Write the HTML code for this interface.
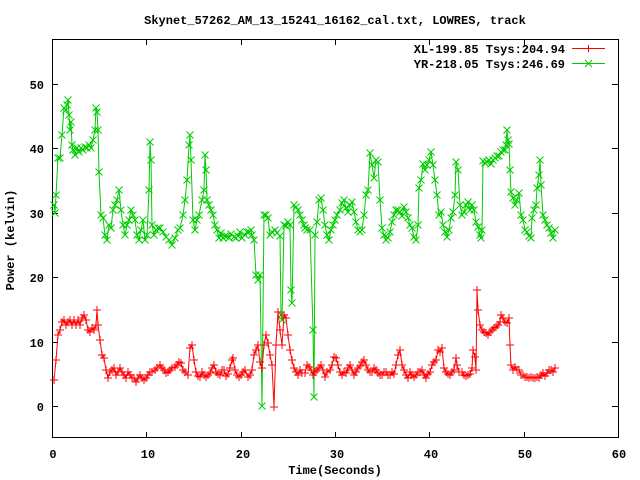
<!DOCTYPE html>
<html><head><style>
html,body{margin:0;padding:0;background:#fff;}
svg{display:block;}
text{font-family:"Liberation Mono",monospace;font-weight:bold;font-size:12px;fill:#000;}
</style></head><body>
<svg width="640" height="480" viewBox="0 0 640 480">
<defs>
<marker id="mp" markerUnits="userSpaceOnUse" markerWidth="10" markerHeight="10" refX="5" refY="5" overflow="visible"><path d="M1 5H9M5 1V9" stroke="#f00" stroke-width="1" fill="none"/></marker>
<marker id="mx" markerUnits="userSpaceOnUse" markerWidth="10" markerHeight="10" refX="5" refY="5" overflow="visible"><path d="M1.5 1.5L8.5 8.5M8.5 1.5L1.5 8.5" stroke="#0c0" stroke-width="1" fill="none"/></marker>
</defs>
<text x="335" y="24" text-anchor="middle">Skynet_57262_AM_13_15241_16162_cal.txt, LOWRES, track</text>
<g stroke="#000" stroke-width="1" fill="none" shape-rendering="crispEdges">
<rect x="52.5" y="39.5" width="566" height="398"/>
<path d="M52 84.5h6M52 148.5h6M52 213.5h6M52 277.5h6M52 342.5h6M52 406.5h6M618 84.5h-6M618 148.5h-6M618 213.5h-6M618 277.5h-6M618 342.5h-6M618 406.5h-6"/>
<path d="M146.5 438v-6M241.5 438v-6M335.5 438v-6M429.5 438v-6M524.5 438v-6M146.5 39v6M241.5 39v6M335.5 39v6M429.5 39v6M524.5 39v6"/>
</g>
<g text-anchor="end">
<text x="44" y="89">50</text><text x="44" y="153">40</text><text x="44" y="218">30</text><text x="44" y="282">20</text><text x="44" y="347">10</text><text x="44" y="411">0</text>
</g>
<g text-anchor="middle">
<text x="53" y="458">0</text><text x="148" y="458">10</text><text x="243" y="458">20</text><text x="337" y="458">30</text><text x="431" y="458">40</text><text x="525" y="458">50</text><text x="619" y="458">60</text>
<text x="335" y="474">Time(Seconds)</text>
</g>
<text x="14" y="240" text-anchor="middle" transform="rotate(-90 14 240)">Power (kelvin)</text>
<text x="565" y="53" text-anchor="end">XL-199.85 Tsys:204.94</text>
<text x="565" y="68" text-anchor="end">YR-218.05 Tsys:246.69</text>
<path d="M572 48.5h33" stroke="#f00"/><path d="M588.5 45v7" stroke="#f00"/>
<path d="M572 63.5h33" stroke="#0c0"/><path d="M585 60l7 7M592 60l-7 7" stroke="#0c0"/>
<polyline fill="none" stroke="#0c0" stroke-width="1" marker-start="url(#mx)" marker-mid="url(#mx)" marker-end="url(#mx)" points="54,205 55,213 56,195 58,158 60,158 62,135 64,108 66,110 67,105 68,100 69,115 70,130 71,122 72,145 73,150 75,155 77,148 79,152 81,148 83,150 85,147 87,148 89,145 91,148 93,140 95,130 96,108 97,112 98,130 99,172 101,215 103,218 105,235 107,240 109,225 111,228 113,210 115,205 117,200 119,190 121,210 123,225 125,235 127,225 129,220 131,210 133,215 135,220 137,235 139,240 141,230 143,220 145,240 147,235 149,190 150,142 151,160 152,225 154,235 156,230 158,228 160,228 163,232 166,237 169,240 172,245 175,238 178,230 180,228 183,215 185,200 187,180 189,145 190,135 191,160 193,220 195,230 197,220 199,215 202,200 204,190 205,155 206,170 207,200 209,205 211,210 213,215 215,225 217,230 219,238 221,233 223,238 225,236 227,236 229,238 231,234 234,237 236,238 238,236 240,232 242,238 245,235 247,232 249,232 251,230 252,235 254,240 256,275 258,280 260,275 262,406 264,215 266,215 268,218 270,235 272,232 275,230 277,233 280,236 281,315 282,320 284,225 286,226 288,222 290,225 291,290 292,303 294,205 296,207 298,210 300,215 302,220 304,225 305,228 307,230 310,230 313,330 314,397 315,235 317,222 319,200 321,198 323,210 325,225 327,235 329,240 331,230 333,225 335,220 337,215 340,210 342,203 344,200 346,208 348,212 350,205 352,202 354,212 356,222 358,230 360,232 362,230 364,215 366,195 368,190 370,153 372,165 374,178 376,160 378,162 380,200 382,228 384,235 386,240 388,238 390,232 392,222 394,215 396,210 398,210 400,212 402,216 404,207 406,212 408,218 410,225 412,228 414,237 416,240 418,225 419,188 421,180 423,164 425,170 427,165 429,160 431,152 433,165 435,180 437,195 439,215 441,212 443,225 445,232 447,237 449,230 451,218 453,212 455,195 456,162 458,170 460,205 462,215 464,212 466,205 468,202 470,210 472,205 474,210 476,222 478,227 480,235 481,238 482,230 483,161 485,163 487,162 489,160 491,164 493,160 495,158 497,156 499,156 501,152 503,150 505,150 506,145 507,130 508,140 509,144 510,170 511,192 513,198 515,205 517,200 519,193 521,215 523,220 525,230 527,232 529,236 531,238 532,218 534,210 536,205 537,188 539,175 540,160 541,185 543,215 545,220 547,225 549,228 551,233 553,238 555,230"/>
<polyline fill="none" stroke="#f00" stroke-width="1" marker-start="url(#mp)" marker-mid="url(#mp)" marker-end="url(#mp)" points="54,380 56,360 58,335 60,330 62,322 64,320 66,325 68,322 70,320 72,325 74,320 76,325 78,320 80,325 82,318 84,315 86,320 88,330 90,332 92,328 94,330 96,325 97,310 98,325 100,340 102,355 104,358 106,370 108,378 110,372 112,370 114,368 116,375 118,372 120,368 122,372 124,375 126,378 128,372 130,375 132,378 134,378 136,382 138,378 140,375 142,378 144,380 146,378 148,375 150,372 152,372 155,370 157,368 160,365 162,368 164,370 166,373 168,372 170,370 172,368 175,367 177,365 179,362 181,363 183,370 185,372 188,375 190,348 192,345 194,360 196,372 198,376 200,377 202,372 204,375 206,377 208,375 210,373 212,368 214,365 216,372 218,374 220,375 222,370 224,370 226,376 228,374 230,368 232,360 233,358 235,370 237,375 239,377 241,375 243,372 245,370 248,377 250,375 252,370 254,355 256,350 258,345 260,362 262,368 264,345 266,335 268,343 270,355 272,365 274,407 276,345 278,312 280,330 282,345 284,315 286,318 288,335 290,350 292,360 294,368 296,372 298,375 300,370 302,373 305,373 307,365 309,367 311,370 313,375 315,372 317,370 319,368 321,365 323,370 325,377 327,372 330,370 332,365 334,357 336,358 338,365 340,372 342,375 344,372 346,373 348,368 350,365 352,370 354,375 356,372 358,368 360,366 362,362 364,360 366,365 368,370 370,372 372,372 374,368 376,370 378,373 380,375 382,375 384,372 386,372 388,375 390,375 392,372 394,374 396,365 398,355 400,350 402,365 404,370 406,375 408,378 410,372 412,375 414,377 416,375 418,372 420,372 422,370 424,375 426,378 428,374 430,372 432,365 434,362 436,360 438,350 440,352 442,348 444,368 446,372 448,374 450,375 452,372 454,370 456,358 457,365 459,372 462,372 464,375 466,376 468,375 470,374 472,368 473,350 475,357 476,370 477,290 478,310 480,325 482,330 484,332 486,333 488,335 490,332 492,330 494,328 496,327 498,325 500,322 501,315 503,318 505,322 507,323 509,318 510,345 511,365 513,370 515,367 517,370 519,370 521,375 523,375 525,377 527,377 529,378 531,377 533,378 535,378 537,377 539,378 541,375 543,373 545,376 547,373 549,370 551,370 553,372 555,368"/>
</svg>
</body></html>
